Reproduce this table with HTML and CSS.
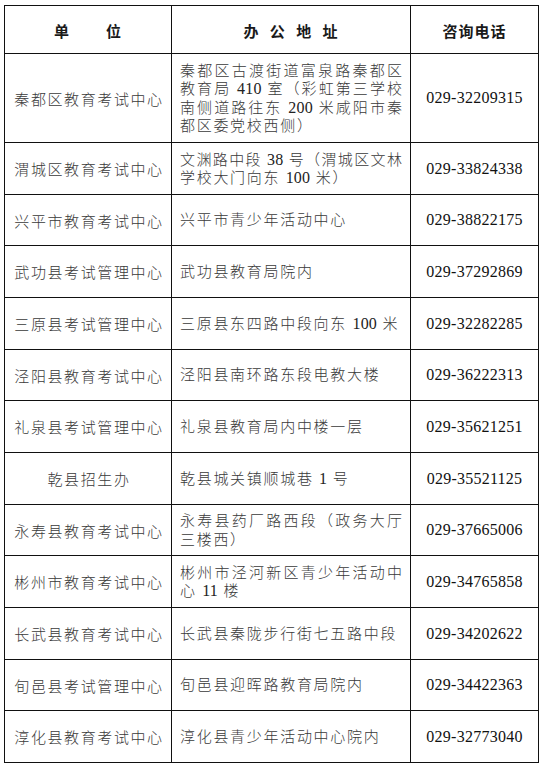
FILE: index.html
```html
<!DOCTYPE html>
<html lang="zh-CN">
<head>
<meta charset="utf-8">
<title>咨询电话</title>
<link rel="stylesheet" href="styles.css">
</head>
<body>
<div class="table">
  <div class="cell head">单<span class="wide"></span>位</div>
  <div class="cell head head-addr">办 公 地 址</div>
  <div class="cell head">咨询电话</div>

  <div class="cell unit">秦都区教育考试中心</div>
  <div class="cell addr">
    <span class="ln fill">秦都区古渡街道富泉路秦都区</span>
    <span class="ln fill">教育局 <span class="num">410</span> 室（彩虹第三学校</span>
    <span class="ln fill">南侧道路往东 <span class="num">200</span> 米咸阳市秦</span>
    <span class="ln">都区委党校西侧）</span>
  </div>
  <div class="cell tel">029-32209315</div>

  <div class="cell unit">渭城区教育考试中心</div>
  <div class="cell addr">
    <span class="ln fill">文渊路中段 <span class="num">38</span> 号（渭城区文林</span>
    <span class="ln">学校大门向东 <span class="num">100</span> 米）</span>
  </div>
  <div class="cell tel">029-33824338</div>

  <div class="cell unit">兴平市教育考试中心</div>
  <div class="cell addr"><span class="ln">兴平市青少年活动中心</span></div>
  <div class="cell tel">029-38822175</div>

  <div class="cell unit">武功县考试管理中心</div>
  <div class="cell addr"><span class="ln">武功县教育局院内</span></div>
  <div class="cell tel">029-37292869</div>

  <div class="cell unit">三原县考试管理中心</div>
  <div class="cell addr"><span class="ln">三原县东四路中段向东 <span class="num">100</span> 米</span></div>
  <div class="cell tel">029-32282285</div>

  <div class="cell unit">泾阳县教育考试中心</div>
  <div class="cell addr"><span class="ln">泾阳县南环路东段电教大楼</span></div>
  <div class="cell tel">029-36222313</div>

  <div class="cell unit">礼泉县考试管理中心</div>
  <div class="cell addr"><span class="ln">礼泉县教育局内中楼一层</span></div>
  <div class="cell tel">029-35621251</div>

  <div class="cell unit">乾县招生办</div>
  <div class="cell addr"><span class="ln">乾县城关镇顺城巷 <span class="num">1</span> 号</span></div>
  <div class="cell tel">029-35521125</div>

  <div class="cell unit">永寿县教育考试中心</div>
  <div class="cell addr">
    <span class="ln fill">永寿县药厂路西段（政务大厅</span>
    <span class="ln">三楼西）</span>
  </div>
  <div class="cell tel">029-37665006</div>

  <div class="cell unit">彬州市教育考试中心</div>
  <div class="cell addr">
    <span class="ln fill">彬州市泾河新区青少年活动中</span>
    <span class="ln">心 <span class="num">11</span> 楼</span>
  </div>
  <div class="cell tel">029-34765858</div>

  <div class="cell unit">长武县教育考试中心</div>
  <div class="cell addr"><span class="ln">长武县秦陇步行街七五路中段</span></div>
  <div class="cell tel">029-34202622</div>

  <div class="cell unit">旬邑县考试管理中心</div>
  <div class="cell addr"><span class="ln">旬邑县迎晖路教育局院内</span></div>
  <div class="cell tel">029-34422363</div>

  <div class="cell unit">淳化县教育考试中心</div>
  <div class="cell addr"><span class="ln">淳化县青少年活动中心院内</span></div>
  <div class="cell tel">029-32773040</div>
</div>
</body>
</html>
```

FILE: styles.css
```css
html, body {
  background: #ffffff;
}
body {
  margin: 5px 0 0 4px;
  font-family: "Liberation Serif", "Noto Sans CJK SC", serif;
  color: #3a3a3a;
}
.table {
  display: grid;
  width: max-content;
  grid-template-columns: 166px 238px 127px;
  grid-template-rows: 47px 88px repeat(4, 51px 50px 51px);
  gap: 1px;
  border: 1px solid #111;
  background: #111;
}
.cell {
  background: #ffffff;
  display: flex;
  align-items: center;
  font-size: 15px;
  font-weight: 300;
}
.head {
  justify-content: center;
  font-family: "Noto Sans CJK SC", sans-serif;
  font-weight: 700;
  font-size: 15px;
  color: #1a1a1a;
  letter-spacing: 1px;
  padding-top: 2px;
}
.wide {
  display: inline-block;
  width: 36px;
}
.head-addr {
  word-spacing: 6px;
}
.unit {
  justify-content: center;
  letter-spacing: 1.6px;
  padding-left: 2px;
}
.addr {
  flex-direction: column;
  align-items: stretch;
  justify-content: center;
  padding: 1px 8px 0 8px;
  letter-spacing: 1.7px;
  line-height: 18.4px;
}
.ln {
  display: block;
  white-space: nowrap;
}
.fill {
  text-align: justify;
  text-align-last: justify;
  letter-spacing: 0;
}
.num {
  font-size: 16px;
  letter-spacing: 0.2px;
  color: #222;
  font-weight: 400;
}
.tel {
  justify-content: center;
  font-size: 16px;
  letter-spacing: 0.25px;
  color: #111;
  font-weight: 400;
}
```
